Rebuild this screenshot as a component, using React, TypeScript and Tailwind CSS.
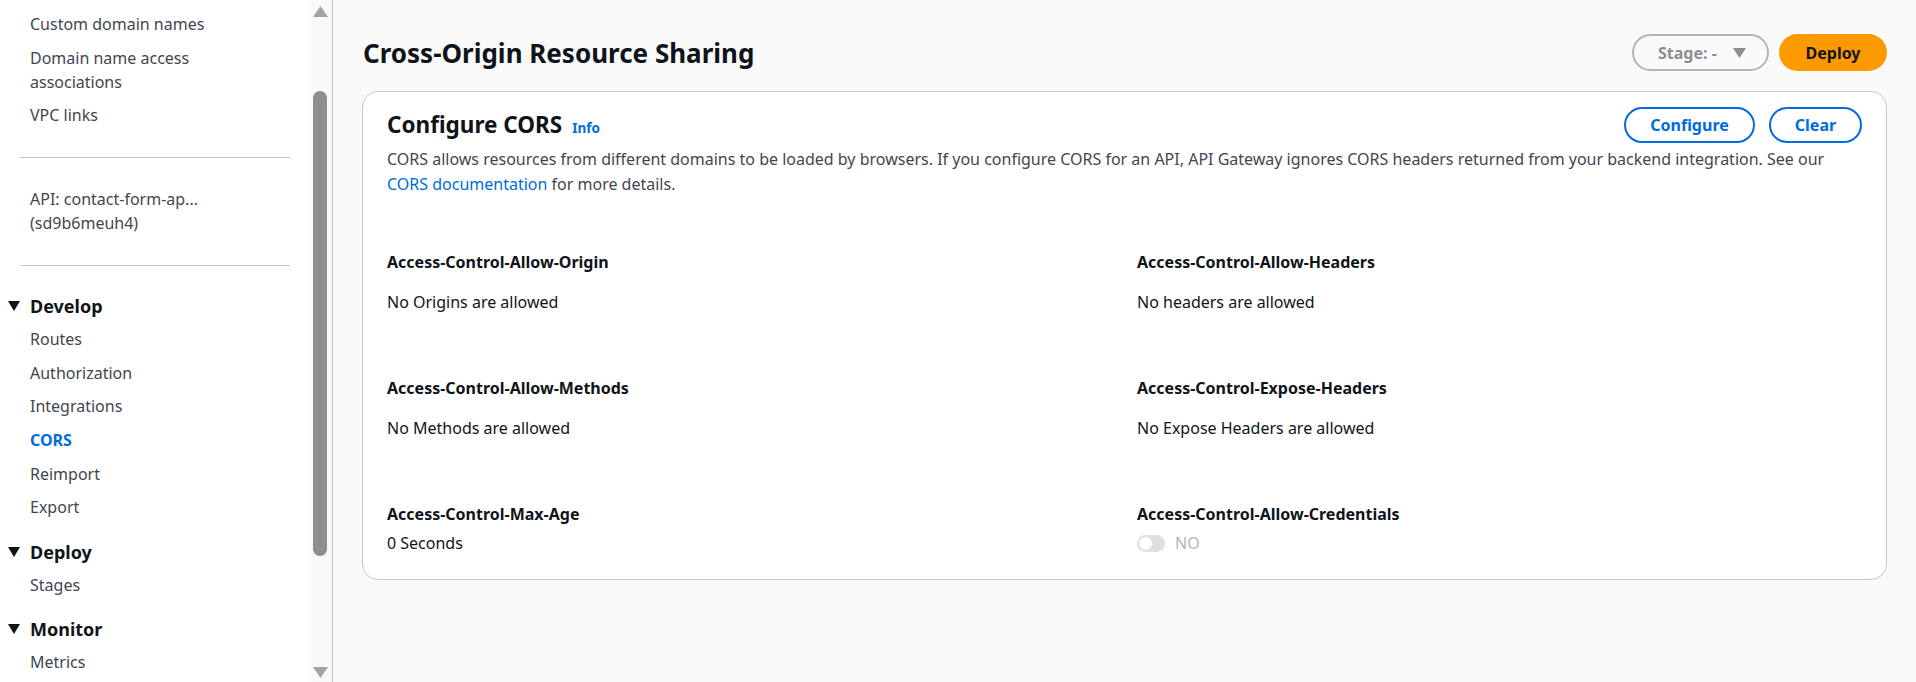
import React from "react";

const font = { fontFamily: "'Noto Sans', 'Liberation Sans', sans-serif" };

const NavItem = ({ label, active = false }: { label: string; active?: boolean }) => (
  <div
    className={`leading-6 text-[16px] ${
      active ? "font-bold text-[#006ce0]" : "text-[#424650]"
    }`}
  >
    {label}
  </div>
);

const NavSection = ({ title }: { title: string }) => (
  <div className="flex items-center h-6 -ml-[22px] text-[18px] font-bold text-[#0f141a]">
    <svg width="12" height="10" viewBox="0 0 12 10" className="mr-[10px]">
      <path d="M0 0 H12 L6 10 Z" fill="#0f141a" />
    </svg>
    {title}
  </div>
);

const Field = ({
  label,
  children,
  tight = false,
}: {
  label: string;
  children: React.ReactNode;
  tight?: boolean;
}) => (
  <div className="flex flex-col">
    <div className="text-[16px] leading-6 font-bold text-[#0f141a]">{label}</div>
    <div className={`${tight ? "mt-[5px]" : "mt-4"} text-[16px] leading-6 text-[#0f141a]`}>
      {children}
    </div>
  </div>
);

export default function App() {
  return (
    <div className="flex w-[1916px] h-[682px] overflow-hidden bg-[#fafafa]" style={font}>
      {/* side nav */}
      <aside className="flex w-[333px] shrink-0 bg-white border-r border-[#c6c6cd]">
        <div className="flex-1 pl-[30px] pt-3 flex flex-col">
          <div className="flex flex-col gap-[9.6px] w-[220px]">
            <NavItem label="Custom domain names" />
            <NavItem label="Domain name access associations" />
            <NavItem label="VPC links" />
          </div>
          <div className="-ml-[10px] mr-[19px] my-[29.5px] border-t border-[#c6c6cd]" />
          <div className="text-[16px] leading-6 text-[#424650]">
            API: contact-form-ap...
            <br />
            (sd9b6meuh4)
          </div>
          <div className="-ml-[10px] mr-[19px] mt-[29.5px] mb-[28.5px] border-t border-[#c6c6cd]" />
          <NavSection title="Develop" />
          <div className="flex flex-col gap-[9.6px] mt-[9px]">
            <NavItem label="Routes" />
            <NavItem label="Authorization" />
            <NavItem label="Integrations" />
            <NavItem label="CORS" active />
            <NavItem label="Reimport" />
            <NavItem label="Export" />
          </div>
          <div className="mt-[21px]">
            <NavSection title="Deploy" />
          </div>
          <div className="mt-[9px]">
            <NavItem label="Stages" />
          </div>
          <div className="mt-[20px]">
            <NavSection title="Monitor" />
          </div>
          <div className="mt-[9px]">
            <NavItem label="Metrics" />
          </div>
        </div>
        {/* scrollbar */}
        <div className="w-[23px] shrink-0 bg-[#f9f9f9] flex flex-col items-center pl-[4px] pr-[5px]">
          <svg width="15" height="11" viewBox="0 0 15 11" className="mt-[6px]">
            <path d="M7.5 0 L15 11 H0 Z" fill="#a3a3a3" />
          </svg>
          <div className="mt-[74px] w-[14px] h-[465px] rounded-full bg-[#8f8f8f]" />
          <div className="flex-1" />
          <svg width="15" height="11" viewBox="0 0 15 11" className="mb-[4px]">
            <path d="M0 0 H15 L7.5 11 Z" fill="#a3a3a3" />
          </svg>
        </div>
      </aside>

      {/* main */}
      <main className="flex-1 pl-[29px] pr-[29px] pt-[34px]">
        <div className="flex items-center justify-between h-[37px]">
          <h1 className="ml-[1px] text-[26px] font-bold text-[#0f141a] leading-9">
            Cross-Origin Resource Sharing
          </h1>
          <div className="flex items-center gap-[10px]">
            <button className="flex items-center h-[37px] w-[137px] rounded-full border-2 border-[#b4b4bb] pl-[24px] text-[16px] font-bold text-[#8c8c94]">
              Stage: -
              <svg width="13" height="10" viewBox="0 0 13 10" className="ml-[16px]">
                <path d="M0 0 H13 L6.5 10 Z" fill="#8c8c94" />
              </svg>
            </button>
            <button className="h-[37px] w-[108px] rounded-full bg-[#ff9900] text-[16px] font-bold text-[#0f141a]">
              Deploy
            </button>
          </div>
        </div>

        <section className="mt-[20px] bg-white border border-[#c6c6cd] rounded-[16px] px-[24px] pt-[15px] pb-[24px]">
          <div className="flex items-center justify-between h-[36px]">
            <div className="flex items-baseline">
              <h2 className="text-[22.5px] font-bold text-[#0f141a]">Configure CORS</h2>
              <span className="ml-[10px] text-[13.5px] font-bold text-[#006ce0]">Info</span>
            </div>
            <div className="flex items-center gap-[14px]">
              <button className="h-[36px] w-[131px] rounded-full border-2 border-[#006ce0] text-[16px] font-bold text-[#006ce0]">
                Configure
              </button>
              <button className="h-[36px] w-[93px] rounded-full border-2 border-[#006ce0] text-[16px] font-bold text-[#006ce0]">
                Clear
              </button>
            </div>
          </div>
          <p className="mt-[4px] text-[16px] leading-[25px] text-[#424650]">
            CORS allows resources from different domains to be loaded by browsers. If you
            configure CORS for an API, API Gateway ignores CORS headers returned from your
            backend integration. See our{" "}
            <span className="text-[#006ce0]">CORS documentation</span> for more details.
          </p>

          <div className="mt-[53px] grid grid-cols-2 gap-x-[25px] gap-y-[62px]">
            <Field label="Access-Control-Allow-Origin">No Origins are allowed</Field>
            <Field label="Access-Control-Allow-Headers">No headers are allowed</Field>
            <Field label="Access-Control-Allow-Methods">No Methods are allowed</Field>
            <Field label="Access-Control-Expose-Headers">No Expose Headers are allowed</Field>
            <Field label="Access-Control-Max-Age" tight>
              0 Seconds
            </Field>
            <Field label="Access-Control-Allow-Credentials" tight>
              <div className="flex items-center gap-[10px]">
                <div className="w-[28px] h-[17px] rounded-full bg-[#dedee3] flex items-center pl-[2px]">
                  <div className="w-[13px] h-[13px] rounded-full bg-white" />
                </div>
                <span className="text-[#b4b4bb]">NO</span>
              </div>
            </Field>
          </div>
        </section>
      </main>
    </div>
  );
}
